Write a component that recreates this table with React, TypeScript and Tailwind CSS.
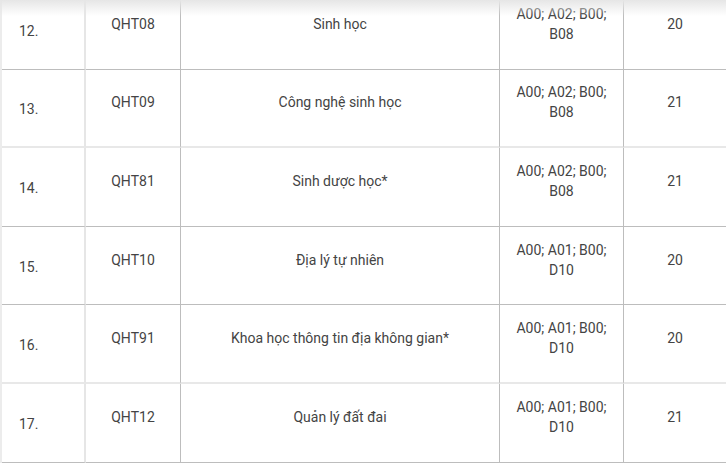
const rows = [
	{ no: "12.", code: "QHT08", name: "Sinh học", combo: "A00; A02; B00; B08", score: "20" },
	{ no: "13.", code: "QHT09", name: "Công nghệ sinh học", combo: "A00; A02; B00; B08", score: "21" },
	{ no: "14.", code: "QHT81", name: "Sinh dược học*", combo: "A00; A02; B00; B08", score: "21" },
	{ no: "15.", code: "QHT10", name: "Địa lý tự nhiên", combo: "A00; A01; B00; D10", score: "20" },
	{ no: "16.", code: "QHT91", name: "Khoa học thông tin địa không gian*", combo: "A00; A01; B00; D10", score: "20" },
	{ no: "17.", code: "QHT12", name: "Quản lý đất đai", combo: "A00; A01; B00; D10", score: "21" },
];

// bottom line per row: crisp gray or soft light (as in the screenshot)
const rowLine = [
	"border-b border-b-[#bdbdbd]",
	"border-b-2 border-b-[#e8e8e8]",
	"border-b border-b-[#bdbdbd]",
	"border-b border-b-[#bdbdbd]",
	"border-b-2 border-b-[#e8e8e8]",
	"border-b border-b-[#bdbdbd]",
];

export default function App() {
	return (
		<div className="relative w-[726px] h-[464px] overflow-hidden bg-white font-['Roboto','Liberation_Sans',sans-serif] text-[14px] leading-[20px] text-[#444]">
			<table className="table-fixed border-separate border-spacing-0 w-[760px] -mt-[9px] border-l-2 border-l-[#ececec]">
				<colgroup>
					<col className="w-[84px]" />
					<col className="w-[95px]" />
					<col className="w-[319px]" />
					<col className="w-[124px]" />
					<col />
				</colgroup>
				<tbody>
					{rows.map((r, i) => (
						<tr key={r.no} className="h-[78.6px]">
							<td className={`align-middle pt-[2px] pl-[17px] border-r-2 border-r-[#e6e6e6] ${rowLine[i]}`}>
								{r.no}
							</td>
							<td className={`align-middle pt-[1px] text-center px-2 border-r border-r-[#bdbdbd] ${rowLine[i]}`}>
								<p className="mb-[13px]">{r.code}</p>
							</td>
							<td className={`align-middle pt-[1px] text-center px-4 border-r border-r-[#bdbdbd] ${rowLine[i]}`}>
								<p className="mb-[13px]">{r.name}</p>
							</td>
							<td className={`align-middle pt-[2px] text-center px-[16px] border-r border-r-[#bdbdbd] ${rowLine[i]}`}>
								<p className="mb-[13px]">{r.combo}</p>
							</td>
							<td className={`align-middle pt-[1px] text-center pr-[34px] ${rowLine[i]}`}>
								<p className="mb-[13px]">{r.score}</p>
							</td>
						</tr>
					))}
				</tbody>
			</table>
			<div className="pointer-events-none absolute inset-x-0 top-0 h-[16px] bg-gradient-to-b from-[#e6e6e6] to-transparent" />
		</div>
	);
}
